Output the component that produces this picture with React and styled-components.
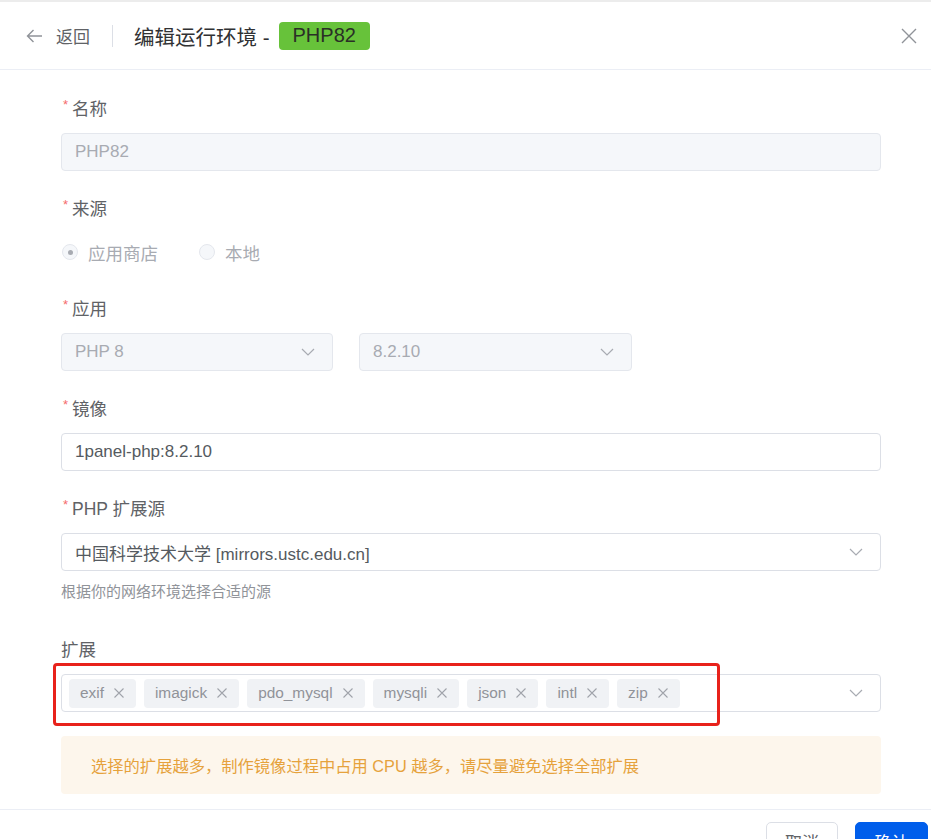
import React from "react";
import styled, { createGlobalStyle } from "styled-components";

const Global = createGlobalStyle`
  html, body { margin: 0; padding: 0; background: #fff; }
  body { font-family: "Liberation Sans", "Noto Sans CJK SC", Arial, sans-serif; }
  * { box-sizing: border-box; }
`;

const Drawer = styled.div`
  width: 931px;
  height: 839px;
  display: flex;
  flex-direction: column;
  overflow: hidden;
  background: #fff;
`;

const Header = styled.div`
  height: 70px;
  flex: none;
  display: flex;
  align-items: center;
  padding: 0 10px 0 26px;
  border-top: 2px solid #ececec;
  border-bottom: 1px solid #ebeef5;
`;

const Back = styled.div`
  display: flex;
  align-items: center;
  gap: 13px;
  color: #606266;
  font-size: 17px;
`;

const VDivider = styled.div`
  width: 1px;
  height: 22px;
  background: #dcdfe6;
  margin: 0 21px 0 22px;
`;

const Title = styled.div`
  font-size: 20.5px;
  color: #303133;
  display: flex;
  align-items: center;
`;

const GreenTag = styled.span`
  margin-left: 9px;
  background: #67c23a;
  color: #2a2f26;
  border-radius: 4px;
  height: 28px;
  padding: 0 14px;
  display: inline-flex;
  align-items: center;
  font-size: 20px;
`;

const Spacer = styled.div`
  flex: 1;
`;

const CloseBtn = styled.div`
  display: flex;
  width: 24px;
  height: 24px;
  align-items: center;
  justify-content: center;
`;

const Body = styled.div`
  flex: 1;
  padding: 25px 50px 0 61px;
  overflow: hidden;
`;

const Item = styled.div`
  margin-bottom: ${(p) => p.$mb ?? 24}px;
`;

const Label = styled.div`
  font-size: 17.5px;
  line-height: 24px;
  padding: 2px 0 12px;
  color: #606266;
  display: flex;
  align-items: flex-start;
`;

const Star = styled.span`
  color: #f56c6c;
  font-size: 13px;
  line-height: 16px;
  margin: 0 4px 0 2px;
`;

const Field = styled.div`
  height: 38px;
  width: ${(p) => (p.$w ? `${p.$w}px` : "100%")};
  border: 1px solid ${(p) => (p.$disabled ? "#e4e7ed" : "#dcdfe6")};
  background: ${(p) => (p.$disabled ? "#f5f7fa" : "#fff")};
  border-radius: 4px;
  padding: 0 17px 0 13px;
  display: flex;
  align-items: center;
  justify-content: space-between;
  font-size: 17px;
  color: ${(p) => (p.$disabled ? "#a8abb2" : "#555a60")};
`;

const Pair = styled.div`
  display: flex;
  gap: 26px;
`;

const RadioRow = styled.div`
  height: 38px;
  display: flex;
  align-items: center;
  gap: 40px;
`;

const Radio = styled.label`
  display: flex;
  align-items: center;
  gap: 10px;
  font-size: 17.5px;
  color: #a8abb2;
`;

const Dot = styled.span`
  width: 16px;
  height: 16px;
  border-radius: 50%;
  border: 1px solid #e4e7ed;
  background: #f5f7fa;
  display: flex;
  align-items: center;
  justify-content: center;
  margin-left: 1px;
  &::after {
    content: "";
    width: 5px;
    height: 5px;
    border-radius: 50%;
    background: ${(p) => (p.$checked ? "#a8abb2" : "transparent")};
  }
`;

const Help = styled.div`
  margin-top: 8px;
  font-size: 15px;
  line-height: 26px;
  color: #909399;
`;

const Annotated = styled.div`
  position: relative;
`;

const RedBox = styled.div`
  position: absolute;
  left: -8px;
  top: -11px;
  width: 667px;
  height: 63px;
  border: 3px solid #e8221b;
  border-radius: 4px;
  pointer-events: none;
`;

const Multi = styled.div`
  height: 38px;
  border: 1px solid #dcdfe6;
  border-radius: 4px;
  padding: 0 17px 0 7px;
  display: flex;
  align-items: center;
`;

const Tags = styled.div`
  flex: 1;
  display: flex;
  gap: 8px;
`;

const Tag = styled.span`
  height: 29px;
  padding: 0 12px 0 11px;
  background: #f0f2f5;
  border-radius: 4px;
  display: inline-flex;
  align-items: center;
  gap: 10px;
  font-size: 15.4px;
  color: #909399;
`;

const Alert = styled.div`
  margin-top: 24px;
  height: 58px;
  background: #fdf6ec;
  border-radius: 4px;
  padding: 0 30px;
  display: flex;
  align-items: center;
  font-size: 16.3px;
  color: #e6a23c;
`;

const Footer = styled.div`
  height: 30px;
  flex: none;
  border-top: 1px solid #ebeef5;
  padding: 12px 3px 0 0;
  display: flex;
  justify-content: flex-end;
  align-items: flex-start;
  gap: 17px;
`;

const Button = styled.button`
  height: 38px;
  width: ${(p) => p.$w}px;
  border-radius: 5px;
  font-family: inherit;
  font-size: 17px;
  flex: none;
  border: 1px solid ${(p) => (p.$primary ? "#005eeb" : "#dcdfe6")};
  background: ${(p) => (p.$primary ? "#005eeb" : "#fff")};
  color: ${(p) => (p.$primary ? "#fff" : "#606266")};
  padding: 0;
`;

const Chevron = () => (
  <svg width="14" height="8" viewBox="0 0 14 8" fill="none">
    <polyline points="1,1 7,7 13,1" stroke="#a8abb2" strokeWidth="1.2" />
  </svg>
);

const TagX = () => (
  <svg width="10" height="10" viewBox="0 0 10 10">
    <path d="M0.5 0.5L9.5 9.5M9.5 0.5L0.5 9.5" stroke="#a0a3aa" strokeWidth="1.1" />
  </svg>
);

const tags = ["exif", "imagick", "pdo_mysql", "mysqli", "json", "intl", "zip"];

export default function App() {
  return (
    <>
      <Global />
      <Drawer>
        <Header>
          <Back>
            <svg width="17" height="14" viewBox="0 0 17 14" fill="none">
              <path d="M16 7H1.5M7.5 1L1.5 7L7.5 13" stroke="#909399" strokeWidth="1.4" />
            </svg>
            <span>返回</span>
          </Back>
          <VDivider />
          <Title>
            编辑运行环境 -<GreenTag>PHP82</GreenTag>
          </Title>
          <Spacer />
          <CloseBtn>
            <svg width="16" height="16" viewBox="0 0 16 16">
              <path d="M1 1L15 15M15 1L1 15" stroke="#909399" strokeWidth="1.4" />
            </svg>
          </CloseBtn>
        </Header>
        <Body>
          <Item>
            <Label><Star>*</Star>名称</Label>
            <Field $disabled>PHP82</Field>
          </Item>
          <Item>
            <Label><Star>*</Star>来源</Label>
            <RadioRow>
              <Radio><Dot $checked />应用商店</Radio>
              <Radio><Dot />本地</Radio>
            </RadioRow>
          </Item>
          <Item>
            <Label><Star>*</Star>应用</Label>
            <Pair>
              <Field $disabled $w={272}>PHP 8<Chevron /></Field>
              <Field $disabled $w={273}>8.2.10<Chevron /></Field>
            </Pair>
          </Item>
          <Item>
            <Label><Star>*</Star>镜像</Label>
            <Field>1panel-php:8.2.10</Field>
          </Item>
          <Item $mb={31}>
            <Label><Star>*</Star>PHP 扩展源</Label>
            <Field>中国科学技术大学 [mirrors.ustc.edu.cn]<Chevron /></Field>
            <Help>根据你的网络环境选择合适的源</Help>
          </Item>
          <Item $mb={0}>
            <Label>扩展</Label>
            <Annotated>
              <Multi>
                <Tags>
                  {tags.map((t) => (
                    <Tag key={t}>{t}<TagX /></Tag>
                  ))}
                </Tags>
                <Chevron />
              </Multi>
              <RedBox />
            </Annotated>
          </Item>
          <Alert>选择的扩展越多，制作镜像过程中占用 CPU 越多，请尽量避免选择全部扩展</Alert>
        </Body>
        <Footer>
          <Button $w={72}>取消</Button>
          <Button $primary $w={73}>确认</Button>
        </Footer>
      </Drawer>
    </>
  );
}
